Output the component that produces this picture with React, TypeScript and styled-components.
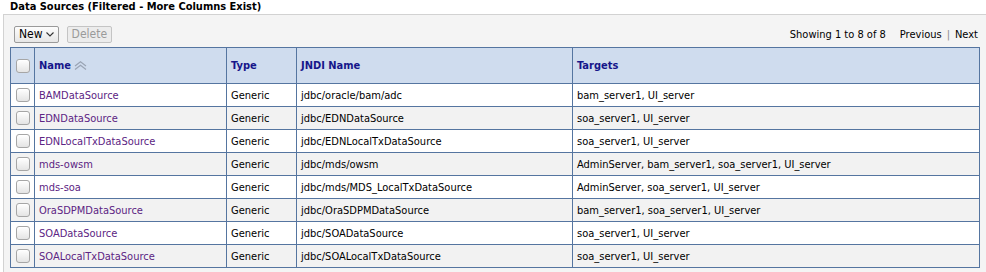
import React from "react";
import styled, { createGlobalStyle } from "styled-components";

type DataSource = {
	name: string;
	type: string;
	jndi: string;
	targets: string;
};

const rows: DataSource[] = [
	{ name: "BAMDataSource", type: "Generic", jndi: "jdbc/oracle/bam/adc", targets: "bam_server1, UI_server" },
	{ name: "EDNDataSource", type: "Generic", jndi: "jdbc/EDNDataSource", targets: "soa_server1, UI_server" },
	{ name: "EDNLocalTxDataSource", type: "Generic", jndi: "jdbc/EDNLocalTxDataSource", targets: "soa_server1, UI_server" },
	{ name: "mds-owsm", type: "Generic", jndi: "jdbc/mds/owsm", targets: "AdminServer, bam_server1, soa_server1, UI_server" },
	{ name: "mds-soa", type: "Generic", jndi: "jdbc/mds/MDS_LocalTxDataSource", targets: "AdminServer, soa_server1, UI_server" },
	{ name: "OraSDPMDataSource", type: "Generic", jndi: "jdbc/OraSDPMDataSource", targets: "bam_server1, soa_server1, UI_server" },
	{ name: "SOADataSource", type: "Generic", jndi: "jdbc/SOADataSource", targets: "soa_server1, UI_server" },
	{ name: "SOALocalTxDataSource", type: "Generic", jndi: "jdbc/SOALocalTxDataSource", targets: "soa_server1, UI_server" },
];

const GlobalStyle = createGlobalStyle`
	body {
		margin: 0;
		background: #fff;
		font-family: "DejaVu Sans", Tahoma, sans-serif;
		font-stretch: condensed;
		font-size: 11px;
		color: #000;
	}
`;

const Title = styled.h2`
	margin: 0;
	padding: 0 0 0 10px;
	height: 14px;
	line-height: 13px;
	font-size: 11px;
	font-weight: bold;
	color: #000;
`;

const Panel = styled.section`
	margin-left: 3px;
	border-top: 1px solid #d2d2d2;
	border-left: 1px solid #d2d2d2;
	background: #f4f4f4;
	padding: 9px 6px 6px 6px;
`;

const Toolbar = styled.div`
	display: flex;
	align-items: center;
	justify-content: space-between;
	height: 20px;
	padding: 0 2px 0 4px;
	margin-bottom: 3px;
`;

const Buttons = styled.div`
	display: flex;
	gap: 8px;
`;

const Button = styled.button<{ $disabled?: boolean }>`
	display: flex;
	align-items: center;
	gap: 3px;
	height: 17px;
	padding: 0 4px;
	font: inherit;
	font-size: 12px;
	color: ${(p) => (p.$disabled ? "#9a9a9a" : "#000")};
	background: ${(p) => (p.$disabled ? "#ececec" : "linear-gradient(#fdfdfd, #e6e6e6)")};
	border: 1px solid ${(p) => (p.$disabled ? "#c4c4c4" : "#9a9a9a")};
	border-radius: 2px;
`;

const Pager = styled.div`
	display: flex;
	align-items: center;
	gap: 4px;
	font-size: 11px;
	color: #000;

	.sep {
		color: #888;
		margin: 0 1px;
	}
	.gap {
		width: 6px;
	}
`;

const Table = styled.table`
	width: 100%;
	border-collapse: collapse;
	border: 1px solid #5575a0;
	background: #fff;
`;

const HeadCell = styled.th<{ $w?: number }>`
	width: ${(p) => (p.$w ? `${p.$w}px` : "auto")};
	height: 35px;
	padding: 0 0 0 4px;
	text-align: left;
	background: #cfdcee;
	border: 1px solid #5575a0;
	color: #16168a;
	font-weight: bold;
	font-size: 11px;
	white-space: nowrap;
`;

const Row = styled.tr<{ $alt: boolean }>`
	background: ${(p) => (p.$alt ? "#f2f2f2" : "#fff")};
`;

const Cell = styled.td`
	height: 22px;
	padding: 0 0 0 4px;
	border: 1px solid #5575a0;
	white-space: nowrap;
`;

const BoxCell = styled(Cell)`
	padding: 0;
	text-align: center;
`;

const Check = styled.span`
	display: inline-block;
	vertical-align: middle;
	width: 12px;
	height: 12px;
	border: 1px solid #a6a6a6;
	border-radius: 3px;
	background: linear-gradient(#ffffff, #e4e4e4);
	box-shadow: inset 0 1px 0 #fff;
`;

const NameLink = styled.a`
	color: #5c2483;
	text-decoration: none;
`;

const SortIcon = () => (
	<svg width="13" height="9" viewBox="0 0 13 9" style={{ marginLeft: 3, verticalAlign: "-1px" }}>
		<path d="M1 5 L6.5 0.8 L12 5" fill="none" stroke="#9aa4b4" strokeWidth="1.2" />
		<path d="M1 8.5 L6.5 4.3 L12 8.5" fill="none" stroke="#9aa4b4" strokeWidth="1.2" />
	</svg>
);

const Caret = () => (
	<svg width="8" height="5" viewBox="0 0 8 5">
		<path d="M0.5 0.5 L4 4 L7.5 0.5" fill="none" stroke="#333" strokeWidth="1.1" />
	</svg>
);

const App: React.FC = () => {
	return (
		<>
			<GlobalStyle />
			<Title>Data Sources (Filtered - More Columns Exist)</Title>
			<Panel>
				<Toolbar>
					<Buttons>
						<Button>
							New <Caret />
						</Button>
						<Button $disabled disabled>
							Delete
						</Button>
					</Buttons>
					<Pager>
						<span>Showing 1 to 8 of 8</span>
						<span className="gap" />
						<span>Previous</span>
						<span className="sep">|</span>
						<span>Next</span>
					</Pager>
				</Toolbar>
				<Table>
					<thead>
						<tr>
							<HeadCell $w={23} style={{ padding: 0, textAlign: "center" }}>
								<Check />
							</HeadCell>
							<HeadCell $w={187}>
								Name
								<SortIcon />
							</HeadCell>
							<HeadCell $w={65}>Type</HeadCell>
							<HeadCell $w={271}>JNDI Name</HeadCell>
							<HeadCell>Targets</HeadCell>
						</tr>
					</thead>
					<tbody>
						{rows.map((r, i) => (
							<Row key={r.name} $alt={i % 2 === 1}>
								<BoxCell>
									<Check />
								</BoxCell>
								<Cell>
									<NameLink href="#">{r.name}</NameLink>
								</Cell>
								<Cell>{r.type}</Cell>
								<Cell>{r.jndi}</Cell>
								<Cell>{r.targets}</Cell>
							</Row>
						))}
					</tbody>
				</Table>
			</Panel>
		</>
	);
};

export default App;
